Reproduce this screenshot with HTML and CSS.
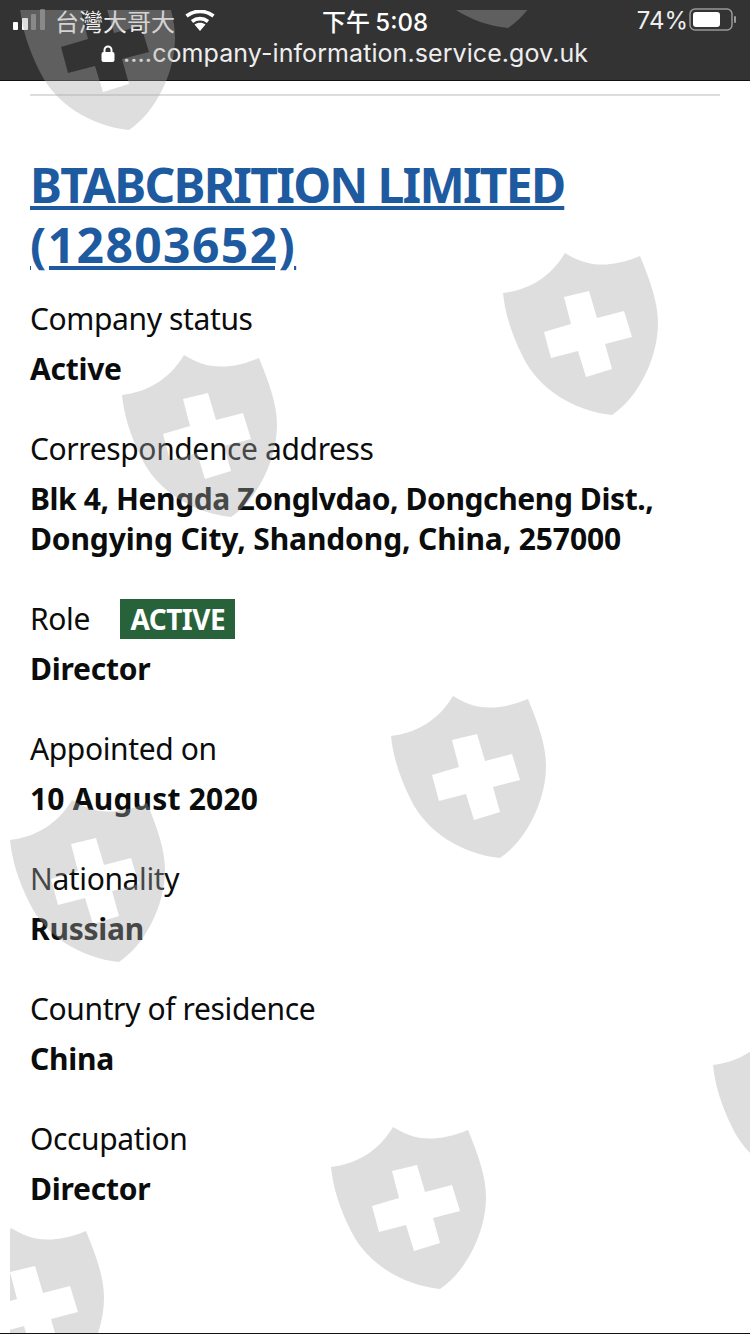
FILE: index.html
```html
<!DOCTYPE html>
<html lang="zh-Hant">
<head>
  <meta charset="UTF-8" />
  <meta name="viewport" content="width=device-width, initial-scale=1.0"/>
  <title>BTABCBRITION LIMITED</title>
  <link rel="stylesheet" href="styles.css">
</head>
<body>
  <header class="phone-bar">
    <div class="status-row">
      <div class="status-left">
        <svg class="signal" width="33" height="22" viewBox="0 0 33 22">
          <rect x="0" y="13" width="5" height="8" rx="1" fill="#fff"/>
          <rect x="9" y="9" width="6" height="12" rx="1" fill="#fff"/>
          <rect x="18" y="5" width="5" height="16" rx="1" fill="#777"/>
          <rect x="27" y="0" width="5" height="21" rx="1" fill="#777"/>
        </svg>
        <span class="carrier">台灣大哥大</span>
        <svg class="wifi" width="30" height="21" viewBox="0 0 30 21">
          <path d="M15 21l-5.500-6.500c3.200-2.500 7.800-2.500 11 0z" fill="#fff"/>
          <path d="M7 11.500c4.800-3.800 11.200-3.800 16 0" fill="none" stroke="#fff" stroke-width="3.600"/>
          <path d="M1.500 6c7.800-6.200 19.200-6.200 27 0" fill="none" stroke="#fff" stroke-width="3.600"/>
        </svg>
      </div>
      <div class="status-time">下午 5:08</div>
      <div class="status-right">
        <span>74%</span>
        <svg class="battery" width="48" height="24" viewBox="0 0 48 24">
          <rect x="1" y="1" width="42" height="21" rx="5" fill="none" stroke="#999" stroke-width="1.500"/>
          <rect x="4" y="4" width="27" height="15" rx="3" fill="#fff"/>
          <rect x="45" y="8" width="2" height="7" rx="1" fill="#999"/>
        </svg>
      </div>
    </div>
    <div class="url-row">
      <svg class="lock" width="14" height="17" viewBox="0 0 14 17">
        <path d="M3.500 8V5a3.500 3.500 0 0 1 7 0v3" fill="none" stroke="#fff" stroke-width="2"/>
        <rect x="0.500" y="7" width="13" height="10" rx="2" fill="#fff"/>
      </svg>
      <span>....company-information.service.gov.uk</span>
    </div>
  </header>

  <main class="content">
    <hr class="rule">
    <h1 class="title"><a href="#">BTABCBRITION LIMITED <span class="title-number">(12803652)</span></a></h1>

    <dl class="details">
      <dt>Company status</dt>
      <dd>Active</dd>

      <dt>Correspondence address</dt>
      <dd><span class="addr-first">Blk 4, Hengda Zonglvdao, Dongcheng Dist.,</span><br><span class="addr-second">Dongying City, Shandong, China, 257000</span></dd>

      <dt>Role <span class="tag">ACTIVE</span></dt>
      <dd>Director</dd>

      <dt>Appointed on</dt>
      <dd class="date">10 August 2020</dd>

      <dt>Nationality</dt>
      <dd>Russian</dd>

      <dt>Country of residence</dt>
      <dd>China</dd>

      <dt>Occupation</dt>
      <dd>Director</dd>
    </dl>
  </main>

  <!-- watermark sits over the whole page, clipped 10px in from top and left -->
  <svg class="watermark" width="740" height="1324" viewBox="10 10 740 1324">
    <defs>
      <path id="shield" fill-rule="evenodd" d="M62 0C80 11 100 18 137 3C148 30 155 50 155 70C155 105 135 145 109 162C70 158 35 135 20 104C8 80 2 60 0 40C25 37 47 25 62 0ZM61 44L86 38L94 65L121 58L129 84L102 91L109 116L83 124L75 98L48 105L41 79L68 71Z"/>
    </defs>
    <use href="#shield" x="20" y="-32"/>
    <use href="#shield" x="399" y="-134"/>
    <use href="#shield" x="503" y="253"/>
    <use href="#shield" x="122" y="355"/>
    <use href="#shield" x="391" y="696"/>
    <use href="#shield" x="10" y="800"/>
    <use href="#shield" x="713" y="1025"/>
    <use href="#shield" x="331" y="1127"/>
    <use href="#shield" x="-51" y="1228"/>
  </svg>
</body>
</html>
```

FILE: styles.css
```css
* {
  box-sizing: border-box;
}
html, body {
  margin: 0;
  height: 1334px;
  overflow: hidden;
}
body {
  position: relative;
  background: #fff;
  color: #0b0c0c;
  font-family: "Noto Sans", Arial, sans-serif;
  border-bottom: 1px solid #111;
}
.phone-bar {
  height: 81px;
  background: #333;
  color: #fff;
  border-bottom: 1px solid #111;
  font-family: Inter, "Noto Sans CJK TC", sans-serif;
}
.status-row {
  display: grid;
  grid-template-columns: 1fr auto 1fr;
  align-items: center;
  height: 38px;
  padding: 2px 13px 0;
  font-size: 24px;
}
.status-left {
  display: flex;
  align-items: center;
}
.carrier {
  margin-left: 9px;
  font-size: 24px;
  color: #eee;
}
.wifi {
  margin-left: 10px;
}
.status-time {
  font-weight: 500;
  word-spacing: -1px;
}
.status-right {
  display: flex;
  align-items: center;
  justify-content: flex-end;
  gap: 1px;
  color: #eee;
}
.url-row {
  display: flex;
  align-items: center;
  gap: 8px;
  height: 30px;
  padding-left: 101px;
  font-size: 25px;
  letter-spacing: 0.08px;
  color: #eee;
}
.content {
  padding: 13px 30px 0;
}
.rule {
  margin: 0;
  border: 0;
  border-top: 2px solid #ddd;
}
.title {
  margin: 59px 0 24px;
  font-size: 48px;
  line-height: 60px;
  font-weight: 700;
  letter-spacing: -1.75px;
}
.title a {
  color: #1d5aa0;
}
.title-number {
  letter-spacing: 1.4px;
}
.details {
  margin: 0;
  font-size: 30px;
  line-height: 40px;
}
.details dt {
  margin-bottom: 10px;
  letter-spacing: -0.38px;
}
.details dd {
  margin: 0 0 40px;
  font-weight: 700;
  letter-spacing: -0.25px;
}
.details .date {
  letter-spacing: 0.2px;
}
.addr-first {
  letter-spacing: -0.4px;
}
.addr-second {
  letter-spacing: -0.12px;
}
.tag {
  display: inline-block;
  margin-left: 23px;
  padding: 0 10px;
  background: #28623a;
  color: #fff;
  font-size: 28px;
  font-weight: 700;
  letter-spacing: -0.5px;
}
.watermark {
  position: absolute;
  top: 10px;
  left: 10px;
  fill: rgba(168, 168, 168, 0.38);
  pointer-events: none;
}
```
